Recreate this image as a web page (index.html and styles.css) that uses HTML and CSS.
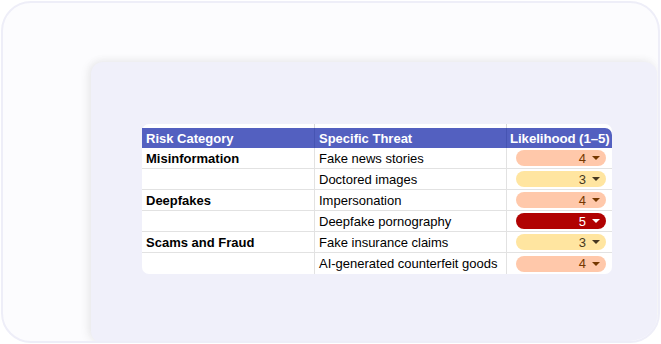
FILE: index.html
```html
<!DOCTYPE html>
<html>
<head>
<meta charset="utf-8">
<link rel="stylesheet" href="styles.css">
</head>
<body>
<div class="card">
  <div class="panel">
    <div class="sheet">
      <div class="row head">
        <div class="cell c1">Risk Category</div>
        <div class="cell c2">Specific Threat</div>
        <div class="cell c3 hc">Likelihood (1–5)</div>
      </div>
      <div class="row">
        <div class="cell c1 cat">Misinformation</div>
        <div class="cell c2">Fake news stories</div>
        <div class="cell c3"><span class="pill p4">4<i class="caret"></i></span></div>
      </div>
      <div class="row">
        <div class="cell c1"></div>
        <div class="cell c2">Doctored images</div>
        <div class="cell c3"><span class="pill p3">3<i class="caret"></i></span></div>
      </div>
      <div class="row">
        <div class="cell c1 cat">Deepfakes</div>
        <div class="cell c2">Impersonation</div>
        <div class="cell c3"><span class="pill p4">4<i class="caret"></i></span></div>
      </div>
      <div class="row">
        <div class="cell c1"></div>
        <div class="cell c2">Deepfake pornography</div>
        <div class="cell c3"><span class="pill p5">5<i class="caret"></i></span></div>
      </div>
      <div class="row">
        <div class="cell c1 cat">Scams and Fraud</div>
        <div class="cell c2">Fake insurance claims</div>
        <div class="cell c3"><span class="pill p3">3<i class="caret"></i></span></div>
      </div>
      <div class="row last">
        <div class="cell c1"></div>
        <div class="cell c2">AI-generated counterfeit goods</div>
        <div class="cell c3"><span class="pill p4">4<i class="caret"></i></span></div>
      </div>
    </div>
  </div>
</div>
</body>
</html>
```
FILE: styles.css
```css
html, body {
  margin: 0;
  padding: 0;
  background: #ffffff;
}
body {
  width: 661px;
  height: 344px;
  overflow: hidden;
  font-family: "Liberation Sans", Arial, sans-serif;
}
.card {
  position: relative;
  box-sizing: border-box;
  margin: 1px 0 0 1px;
  width: 659px;
  height: 342px;
  border: 2px solid #eeeef8;
  border-radius: 30px;
  background: #fcfcfe;
  overflow: hidden;
}
.panel {
  position: absolute;
  left: 88px;
  top: 59px;
  width: 566px;
  height: 281px;
  box-sizing: border-box;
  background: #f0f0fa;
  border-radius: 12px 12px 26px 12px;
  box-shadow: -3px 0 10px rgba(0, 0, 0, 0.07), 0 -3px 8px rgba(0, 0, 0, 0.03);
  padding: 62px 0 0 51px;
}
.sheet {
  width: 470px;
  background: #ffffff;
  border-radius: 7px;
  padding-top: 4px;
  font-size: 13px;
  color: #000;
  position: relative;
}
.sheet::before {
  content: "";
  position: absolute;
  left: 172px;
  top: 0;
  width: 1px;
  height: 4px;
  background: #d8d8d8;
}
.sheet::after {
  content: "";
  position: absolute;
  left: 364px;
  top: 0;
  width: 1px;
  height: 4px;
  background: #d8d8d8;
}
.row {
  display: grid;
  grid-template-columns: 173px 192px 105px;
  height: 21px;
  border-bottom: 1px solid #e2e2e2;
  box-sizing: border-box;
}
.row.last {
  border-bottom: none;
}
.row.head {
  background: #5360c0;
  color: #ffffff;
  font-weight: bold;
  height: 20px;
  border-bottom: none;
  border-top-right-radius: 7px;
}
.cell {
  display: flex;
  align-items: center;
  padding: 0 4px;
  white-space: nowrap;
  border-right: 1px solid #e2e2e2;
  box-sizing: border-box;
}
.head .cell {
  border-right: 1px solid #4654b2;
}
.cell.c3 {
  border-right: none;
  overflow: visible;
  padding-left: 9px;
}
.head .cell.hc {
  padding: 0 0 0 3px;
  font-size: 13.3px;
  letter-spacing: -0.1px;
}
.cat {
  font-weight: bold;
}
.pill {
  display: flex;
  align-items: center;
  justify-content: flex-end;
  width: 90px;
  height: 16px;
  border-radius: 8px;
  box-sizing: border-box;
  padding-right: 6px;
  font-size: 13px;
}
.caret {
  display: inline-block;
  width: 0;
  height: 0;
  margin-left: 6px;
  border-left: 4px solid transparent;
  border-right: 4px solid transparent;
  border-top: 4px solid currentColor;
}
.p4 {
  background: #ffc8aa;
  color: #753800;
}
.p3 {
  background: #ffe5a0;
  color: #473821;
}
.p5 {
  background: #b10202;
  color: #ffffff;
}
```
